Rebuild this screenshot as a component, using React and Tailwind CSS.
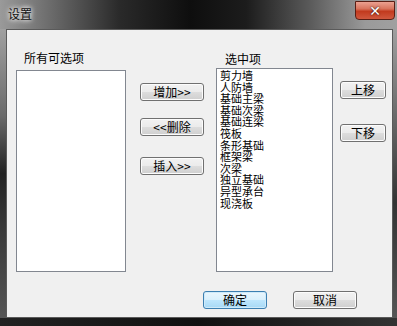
import React from "react";

const font = { fontFamily: '"Noto Sans CJK SC", "Noto Sans", sans-serif' };

function Btn({ children, w, def }) {
  return (
    <div
      className={
        "h-[18px] flex items-center justify-center rounded-[3px] border text-[12px] leading-none text-black " +
        (def
          ? "border-[#3c7fb1] bg-[linear-gradient(#eaf6fd_0%,#d9f0fc_50%,#bee6fd_51%,#a7d9f5_100%)] shadow-[inset_0_0_0_1px_#cfeaf9]"
          : "border-[#707070] bg-[linear-gradient(#f2f2f2_0%,#ebebeb_50%,#dddddd_51%,#cfcfcf_100%)] shadow-[inset_0_0_0_1px_#fcfcfc]")
      }
      style={{ width: w }}
    >
      {children}
    </div>
  );
}

const items = [
  "剪力墙",
  "人防墙",
  "基础主梁",
  "基础次梁",
  "基础连梁",
  "筏板",
  "条形基础",
  "框架梁",
  "次梁",
  "独立基础",
  "异型承台",
  "现浇板",
];

export default function App() {
  return (
    <div
      className="w-[397px] h-[326px] flex flex-col bg-[linear-gradient(90deg,#8c8c8c_0%,#4a4a4a_20%,#1a1a1a_40%,#2a2a2a_60%,#6a6a6a_80%,#8a8a8a_100%)] overflow-hidden"
      style={font}
    >
      <div className="h-[29px] flex items-start shrink-0 bg-[linear-gradient(90deg,#9a9a9a_0%,#6e6e6e_12%,#2a2a2a_30%,#0e0e0e_48%,#1c1c1c_62%,#5a5a5a_78%,#9a9a9a_92%,#a0a0a0_100%)]">
        <div className="ml-[8px] mt-[7px] text-[12px] leading-[14px] text-[#111] [text-shadow:0_0_4px_#fff,0_0_6px_#fff]">
          设置
        </div>
        <div className="ml-auto mr-[2px] mt-[1px] w-[40px] h-[19px] rounded-b-[4px] border border-[#5a1e14] bg-[linear-gradient(#eba191_0%,#d8735c_40%,#c23a1e_55%,#d0583e_100%)] flex items-center justify-center text-white text-[14px] font-bold leading-none [text-shadow:0_0_2px_#000]" style={{ fontFamily: '"DejaVu Sans", sans-serif' }}>
          ✕
        </div>
      </div>
      <div className="flex flex-1 min-h-0">
        <div className="w-[6px] shrink-0 bg-[linear-gradient(#a0a0a0_0%,#6a6a6a_30%,#222_50%,#3a3a3a_70%,#555_100%)]" />
        <div className="w-[387px] h-[289px] bg-[#f0f0f0] border border-[#5a5a5a] flex flex-col">
          <div className="flex items-start">
            <div className="ml-[9px] mt-[21px] flex flex-col">
              <div className="ml-[8px] h-[14px] text-[12px] leading-[14px] text-black">所有可选项</div>
              <div className="mt-[5px] w-[110px] h-[202px] bg-white border border-[#828790]" />
            </div>
            <div className="ml-[14px] mt-[53px] flex flex-col">
              <Btn w={64}>增加&gt;&gt;</Btn>
              <div className="mt-[17px]">
                <Btn w={64}>&lt;&lt;删除</Btn>
              </div>
              <div className="mt-[21px]">
                <Btn w={64}>插入&gt;&gt;</Btn>
              </div>
            </div>
            <div className="ml-[12px] mt-[22px] flex flex-col">
              <div className="ml-[9px] h-[14px] text-[12px] leading-[14px] text-black">选中项</div>
              <div className="mt-[2px] w-[117px] h-[204px] bg-white border border-[#828790] pl-[3px] pt-[1px]">
                {items.map((t) => (
                  <div key={t} className="text-[11px] leading-[11.6px] h-[11.6px] text-black whitespace-nowrap">
                    {t}
                  </div>
                ))}
              </div>
            </div>
            <div className="ml-[7px] mt-[51px] flex flex-col">
              <Btn w={46}>上移</Btn>
              <div className="mt-[25px]">
                <Btn w={46}>下移</Btn>
              </div>
            </div>
          </div>
          <div className="flex mt-[19px] ml-[196px]">
            <Btn w={64} def>确定</Btn>
            <div className="ml-[26px]">
              <Btn w={64}>取消</Btn>
            </div>
          </div>
        </div>
        <div className="flex-1 bg-[linear-gradient(#a0a0a0_0%,#6a6a6a_30%,#333_60%,#555_100%)]" />
      </div>
      <div className="h-[8px] shrink-0 bg-[linear-gradient(90deg,#222_0%,#111_50%,#333_100%)]" />
    </div>
  );
}
